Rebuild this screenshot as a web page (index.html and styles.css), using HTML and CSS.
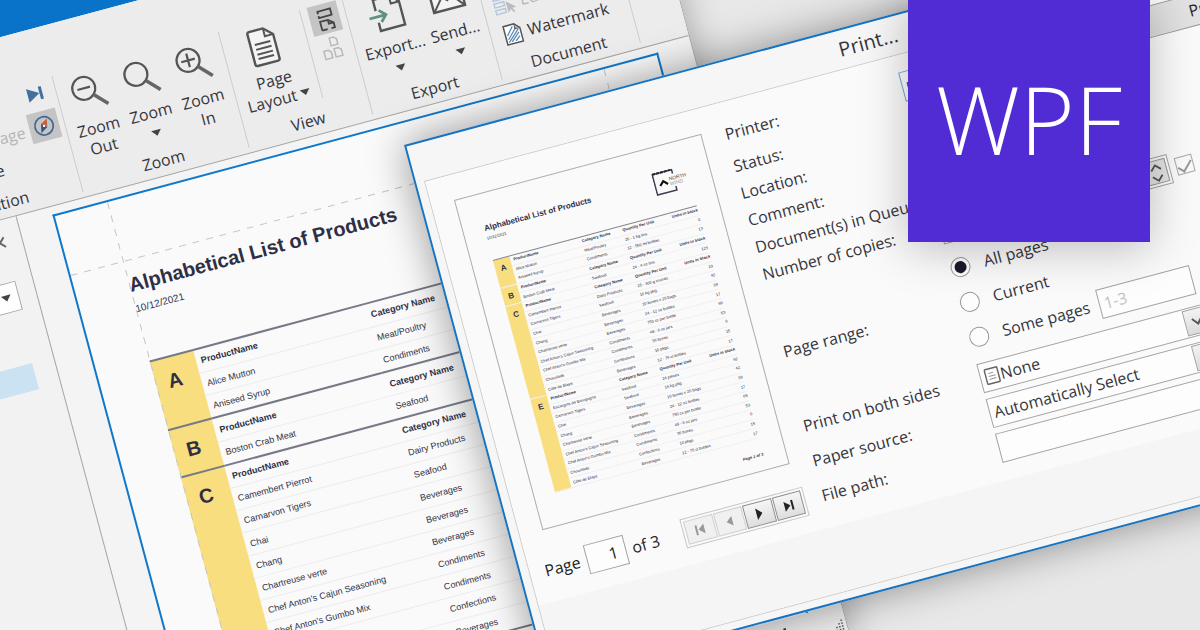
FILE: index.html
```
<!DOCTYPE html>
<html lang="en">
<head>
<meta charset="utf-8">
<title>WPF document viewer and print dialog</title>
<link rel="stylesheet" href="styles.css">
</head>
<body>
<main class="desktop">

  <section class="window" aria-label="Report viewer">
    <header class="window-title"></header>
    <div class="ribbon">
      <div class="group group-nav">
        <div class="tools">
          <div class="small-list">
            <button class="small-tool" type="button"></button>
            <button class="small-tool" type="button" disabled>Next Page</button>
            <button class="small-tool indent" type="button">Go to Page</button>
          </div>
          <div class="icon-list">
            <button class="icon-tool" type="button" aria-label="Last page">
              <svg width="30" height="30" viewBox="0 0 30 30"><path d="M7 6 L19 13 L7 20Z" fill="#41719f"/><path d="M20.500 6.500V19.500" stroke="#41719f" stroke-width="3"/></svg>
            </button>
            <button class="icon-tool active" type="button" aria-label="Navigate">
              <svg width="30" height="30" viewBox="0 0 30 30"><circle cx="15" cy="15" r="9.200" fill="none" stroke="#3d6796" stroke-width="1.700"/><path d="M19.500 8.500 L17.800 17 L12.500 12.500Z" fill="#c8623c"/><path d="M10.500 21.500 L12.500 12.500 L17.800 17Z" fill="#35587f"/><circle cx="15" cy="15" r="1.200" fill="#fff"/></svg>
            </button>
          </div>
        </div>
        <div class="group-name">Navigation</div>
      </div>

      <div class="group group-zoom">
        <div class="tools centered">
          <button class="big-tool" type="button">
            <svg width="40" height="40" viewBox="0 0 40 40"><circle cx="15" cy="14" r="11.500" fill="none" stroke="#555" stroke-width="2.200"/><path d="M8.500 14H21.500" stroke="#555" stroke-width="2.200"/><path d="M23 22.500 L35 35" stroke="#666" stroke-width="3.600"/></svg>
            <span>Zoom<br>Out</span>
          </button>
          <button class="big-tool" type="button">
            <svg width="40" height="40" viewBox="0 0 40 40"><circle cx="15" cy="14" r="11.500" fill="none" stroke="#555" stroke-width="2.200"/><path d="M23 22.500 L35 35" stroke="#666" stroke-width="3.600"/></svg>
            <span>Zoom</span><i class="drop"></i>
          </button>
          <button class="big-tool" type="button">
            <svg width="40" height="40" viewBox="0 0 40 40"><circle cx="15" cy="14" r="11.500" fill="none" stroke="#555" stroke-width="2.200"/><path d="M8 14H22M15 7V21" stroke="#555" stroke-width="2.200"/><path d="M23 22.500 L35 35" stroke="#666" stroke-width="3.600"/></svg>
            <span>Zoom<br>In</span>
          </button>
        </div>
        <div class="group-name">Zoom</div>
      </div>

      <div class="group group-view">
        <div class="tools">
          <button class="big-tool wide" type="button">
            <svg width="40" height="40" viewBox="0 0 40 40"><path d="M8 2.500H22.500L31 10.500V35.500Q31 37.500 29 37.500H8Q6 37.500 6 35.500V4.500Q6 2.500 8 2.500Z" fill="#f4f4f4" stroke="#555" stroke-width="2.400"/><path d="M22.500 3V10.500H30.500" fill="none" stroke="#555" stroke-width="2"/><path d="M10.500 16.500H26.500M10.500 21.500H26.500M10.500 26.500H26.500M10.500 31H26.500" stroke="#555" stroke-width="2"/></svg>
            <span>Page<br>Layout <i class="drop inline"></i></span>
          </button>
          <div class="rule"></div>
          <div class="icon-list">
            <button class="icon-tool active" type="button" aria-label="Continuous layout">
              <svg width="30" height="30" viewBox="0 0 30 30" fill="none" stroke="#444" stroke-width="1.800"><path d="M9.500 9V6.500H22.500V13H9.500V11"/><path d="M9.500 26V17H17.500L22.500 21V26H19M9.500 26H15"/><path d="M17.500 17V21H22.500"/></svg>
            </button>
            <button class="icon-tool" type="button" aria-label="Page grid">
              <svg width="30" height="30" viewBox="0 0 30 30" fill="none" stroke="#b9b9b9" stroke-width="1.500"><path d="M14 4H18.500L21 6.500V12H14Z"/><path d="M5.500 15.500H10L12.500 18V24H5.500Z"/><path d="M16 15.500H20.500L23 18V24H16Z"/></svg>
            </button>
          </div>
        </div>
        <div class="group-name">View</div>
      </div>

      <div class="group group-export">
        <div class="tools centered">
          <button class="big-tool mid" type="button">
            <svg width="40" height="40" viewBox="0 0 40 40"><path d="M10 15V3.500H27L35 11V35.500H10V27" fill="none" stroke="#555" stroke-width="2.400"/><path d="M26.500 4V11.500H34.500" fill="none" stroke="#555" stroke-width="2"/><path d="M2 21H18M13 15L19 21L13 27" fill="none" stroke="#5f917c" stroke-width="2.800"/></svg>
            <span>Export...</span><i class="drop"></i>
          </button>
          <button class="big-tool mid" type="button">
            <svg width="40" height="40" viewBox="0 0 40 40"><rect x="4" y="8" width="32" height="24" fill="#f4f4f4" stroke="#555" stroke-width="2.400"/><path d="M5 9L20 23L35 9M5 31L15 19M35 31L25 19" fill="none" stroke="#555" stroke-width="2"/></svg>
            <span>Send...</span><i class="drop"></i>
          </button>
        </div>
        <div class="group-name">Export</div>
      </div>

      <div class="group group-document">
        <div class="tools">
          <div class="small-list">
            <button class="small-tool" type="button"></button>
            <button class="small-tool" type="button" disabled>
              <svg width="24" height="24" viewBox="0 0 24 24" fill="none"><path d="M1 2H13V7H1ZM1 10H11V14H1ZM1 17H11V21H1Z" stroke="#b6c8dc" stroke-width="1.500"/><path d="M13 10V22L16 19L18.500 23L20 22L18 18H22Z" fill="#bcbcbc"/></svg>Editing Fields
            </button>
            <button class="small-tool" type="button">
              <svg width="24" height="24" viewBox="0 0 24 24" fill="none"><path d="M4 3H15L20 8V22H4Z" fill="#fff" stroke="#555" stroke-width="1.500"/><path d="M6 13L13 5M6 17L17 6M6 20L18 9M9 20L18 12M13 20L18 16" stroke="#5c8ab9" stroke-width="1.300"/><path d="M15 3V8H20" stroke="#555"/></svg>Watermark
            </button>
          </div>
        </div>
        <div class="group-name">Document</div>
      </div>
    </div>

    <div class="workspace">
      <aside class="sidebar">
        <button class="close" type="button" aria-label="Close">
          <svg width="14" height="14" viewBox="0 0 14 14"><path d="M2 2L12 12M12 2L2 12" stroke="#666" stroke-width="2"/></svg>
        </button>
        <button class="combo" type="button" aria-label="Search options"><i class="drop"></i></button>
        <div class="hit"></div>
      </aside>
      <article class="sheet">
        <h1>Alphabetical List of Products</h1>
        <p class="date">10/12/2021</p>
        <table class="products">
          <tbody>
            <tr><th class="letter" rowspan="3">A</th><th class="product">ProductName</th><th>Category Name</th></tr>
            <tr><td>Alice Mutton</td><td>Meat/Poultry</td></tr>
            <tr><td>Aniseed Syrup</td><td>Condiments</td></tr>
          </tbody>
          <tbody>
            <tr><th class="letter" rowspan="2">B</th><th>ProductName</th><th>Category Name</th></tr>
            <tr><td>Boston Crab Meat</td><td>Seafood</td></tr>
          </tbody>
          <tbody>
            <tr><th class="letter" rowspan="10">C</th><th>ProductName</th><th>Category Name</th></tr>
            <tr><td>Camembert Pierrot</td><td>Dairy Products</td></tr>
            <tr><td>Carnarvon Tigers</td><td>Seafood</td></tr>
            <tr><td>Chai</td><td>Beverages</td></tr>
            <tr><td>Chang</td><td>Beverages</td></tr>
            <tr><td>Chartreuse verte</td><td>Beverages</td></tr>
            <tr><td>Chef Anton's Cajun Seasoning</td><td>Condiments</td></tr>
            <tr><td>Chef Anton's Gumbo Mix</td><td>Condiments</td></tr>
            <tr><td>Chocolade</td><td>Confections</td></tr>
            <tr><td>Côte de Blaye</td><td>Beverages</td></tr>
          </tbody>
          <tbody>
            <tr><th class="letter" rowspan="2">E</th><th>ProductName</th><th>Category Name</th></tr>
            <tr><td>Escargots de Bourgogne</td><td>Seafood</td></tr>
          </tbody>
        </table>
      </article>
    </div>

    <footer class="status">
      <svg class="zoom-slider" width="90" height="20" viewBox="0 0 90 20"><path d="M2 10H72" stroke="#aaa"/><path d="M76 10H86M81 5V15" stroke="#333" stroke-width="2.500"/></svg>
      <svg class="grip" width="14" height="14" viewBox="0 0 14 14"><path d="M12 1V14M9 4V14M6 7V14M3 10V14" stroke="#555" stroke-width="1.500" stroke-dasharray="1.500 1.500"/></svg>
    </footer>
  </section>

  <form class="dialog" aria-label="Print">
    <h2>Print...</h2>
    <div class="dialog-body">
      <div class="dialog-content">
        <div class="preview-column">
          <article class="preview">
            <header>
              <div>
                <h3>Alphabetical List of Products</h3>
                <p>10/12/2021</p>
              </div>
              <svg width="36" height="26" viewBox="0 0 36 26"><path d="M21 6V2H1V23H21V19" fill="none" stroke="#3c3f50" stroke-width="1.500"/><path d="M1 2H21" stroke="#222436" stroke-width="2" stroke-dasharray="3 1"/><path d="M6 15L10 11L14 15" fill="none" stroke="#111" stroke-width="2.200"/><text x="16" y="12" font-size="5" fill="#444">NORTH</text><text x="16" y="17" font-size="5" fill="#999">WIND</text></svg>
            </header>
            <table class="mini">
              <tbody>
                <tr><th class="letter" rowspan="3">A</th><th class="product">ProductName</th><th class="category">Category Name</th><th>Quantity Per Unit</th><th>Units in Stock</th></tr>
                <tr><td>Alice Mutton</td><td>Meat/Poultry</td><td>20 - 1 kg tins</td><td>0</td></tr>
                <tr><td>Aniseed Syrup</td><td>Condiments</td><td>12 - 550 ml bottles</td><td>13</td></tr>
              </tbody>
              <tbody>
                <tr><th class="letter" rowspan="2">B</th><th>ProductName</th><th>Category Name</th><th>Quantity Per Unit</th><th>Units in Stock</th></tr>
                <tr><td>Boston Crab Meat</td><td>Seafood</td><td>24 - 4 oz tins</td><td>123</td></tr>
              </tbody>
              <tbody>
                <tr><th class="letter" rowspan="10">C</th><th>ProductName</th><th>Category Name</th><th>Quantity Per Unit</th><th>Units in Stock</th></tr>
                <tr><td>Camembert Pierrot</td><td>Dairy Products</td><td>15 - 300 g rounds</td><td>19</td></tr>
                <tr><td>Carnarvon Tigers</td><td>Seafood</td><td>16 kg pkg.</td><td>42</td></tr>
                <tr><td>Chai</td><td>Beverages</td><td>10 boxes x 20 bags</td><td>39</td></tr>
                <tr><td>Chang</td><td>Beverages</td><td>24 - 12 oz bottles</td><td>17</td></tr>
                <tr><td>Chartreuse verte</td><td>Beverages</td><td>750 cc per bottle</td><td>69</td></tr>
                <tr><td>Chef Anton's Cajun Seasoning</td><td>Condiments</td><td>48 - 6 oz jars</td><td>53</td></tr>
                <tr><td>Chef Anton's Gumbo Mix</td><td>Condiments</td><td>36 boxes</td><td>0</td></tr>
                <tr><td>Chocolade</td><td>Confections</td><td>10 pkgs.</td><td>15</td></tr>
                <tr><td>Côte de Blaye</td><td>Beverages</td><td>12 - 75 cl bottles</td><td>17</td></tr>
              </tbody>
              <tbody>
                <tr><th class="letter" rowspan="10">E</th><th>ProductName</th><th>Category Name</th><th>Quantity Per Unit</th><th>Units in Stock</th></tr>
                <tr><td>Escargots de Bourgogne</td><td>Seafood</td><td>24 pieces</td><td>62</td></tr>
                <tr><td>Carnarvon Tigers</td><td>Seafood</td><td>16 kg pkg.</td><td>42</td></tr>
                <tr><td>Chai</td><td>Beverages</td><td>10 boxes x 20 bags</td><td>39</td></tr>
                <tr><td>Chang</td><td>Beverages</td><td>24 - 12 oz bottles</td><td>17</td></tr>
                <tr><td>Chartreuse verte</td><td>Beverages</td><td>750 cc per bottle</td><td>69</td></tr>
                <tr><td>Chef Anton's Cajun Seasoning</td><td>Condiments</td><td>48 - 6 oz jars</td><td>53</td></tr>
                <tr><td>Chef Anton's Gumbo Mix</td><td>Condiments</td><td>36 boxes</td><td>0</td></tr>
                <tr><td>Chocolade</td><td>Confections</td><td>10 pkgs.</td><td>15</td></tr>
                <tr><td>Côte de Blaye</td><td>Beverages</td><td>12 - 75 cl bottles</td><td>17</td></tr>
              </tbody>
            </table>
            <footer>Page 1 of 3</footer>
          </article>
          <div class="pager">
            <label for="page">Page</label>
            <input id="page" class="box" type="text" value="1">
            <span>of 3</span>
            <div class="pager-nav">
              <button type="button" disabled aria-label="First page"><svg width="16" height="16" viewBox="0 0 16 16"><path d="M4 3V13" stroke="#999" stroke-width="2"/><path d="M12 3V13L6 8Z" fill="#999"/></svg></button>
              <button type="button" disabled aria-label="Previous page"><svg width="16" height="16" viewBox="0 0 16 16"><path d="M11 3V13L5 8Z" fill="#999"/></svg></button>
              <button type="button" aria-label="Next page"><svg width="16" height="16" viewBox="0 0 16 16"><path d="M5 2V14L11 8Z" fill="#222"/></svg></button>
              <button type="button" aria-label="Last page"><svg width="16" height="16" viewBox="0 0 16 16"><path d="M4 3V13L10 8Z" fill="#222"/><path d="M12 3V13" stroke="#222" stroke-width="2"/></svg></button>
            </div>
          </div>
        </div>

        <div class="options">
          <label for="printer">Printer:</label>
          <div class="printer-row">
            <div class="box select focus">
              <svg width="26" height="26" viewBox="0 0 26 26"><path d="M1 10H21V19H1ZM5 4H18V10H5Z" fill="#777" stroke="#555"/></svg>
              <select id="printer"><option></option></select><span class="arrow"></span>
            </div>
            <button class="preferences" type="button">Preferences</button>
          </div>
          <span>Status:</span><span></span>
          <span>Location:</span><span></span>
          <span>Comment:</span><span></span>
          <span>Document(s) in Queue:</span><span></span>
          <label class="copies-label" for="copies">Number of copies:</label>
          <div class="copies">
            <div class="box spin">
              <input id="copies" type="text" value="1">
              <span class="spin-button"><svg width="16" height="24" viewBox="0 0 16 24"><path d="M3 9L8 4L13 9M3 15L8 20L13 15" fill="none" stroke="#555" stroke-width="1.800"/></svg></span>
            </div>
            <label class="collate"><input type="checkbox" checked disabled aria-label="Collate"><svg width="28" height="24" viewBox="0 0 28 24"><path d="M2 5H12V18H2Z" fill="#f3d9a8" stroke="#e0b060"/></svg></label>
          </div>
          <span class="range-label">Page range:</span>
          <div class="range">
            <label><input type="radio" name="range" checked>All pages</label>
            <label><input type="radio" name="range">Current</label>
            <div class="some"><label><input type="radio" name="range">Some pages</label><input class="box" type="text" placeholder="1-3" aria-label="Pages to print"></div>
          </div>
          <label for="sides">Print on both sides</label>
          <div class="box select">
            <svg width="16" height="18" viewBox="0 0 16 18"><rect x="1" y="1.500" width="13" height="15" rx="1" fill="none" stroke="#666" stroke-width="1.500"/><path d="M4 6H9M4 9H11M4 12H11" stroke="#999"/></svg>
            <select id="sides"><option>None</option></select>
            <span class="arrow"><svg width="16" height="16" viewBox="0 0 16 16"><path d="M3 5L8 11L13 5" fill="none" stroke="#555" stroke-width="2"/></svg></span>
          </div>
          <label for="source">Paper source:</label>
          <div class="box select">
            <select id="source"><option>Automatically Select</option></select>
            <span class="arrow"><svg width="16" height="16" viewBox="0 0 16 16"><path d="M3 5L8 11L13 5" fill="none" stroke="#555" stroke-width="2"/></svg></span>
          </div>
          <label for="path">File path:</label>
          <input id="path" class="box" type="text">
        </div>
      </div>
      <div class="dialog-footer"></div>
    </div>
  </form>

  <div class="badge">WPF</div>
</main>
</body>
</html>
```
FILE: styles.css
```
* { box-sizing: border-box; }

body {
  margin: 0;
  font: 16px/20px "Open Sans", "Noto Sans", sans-serif;
  color: #35353c;
}

button, input, select { font: inherit; color: inherit; margin: 0; }
button { padding: 0; border: 0; background: none; }
h1, h2, h3, p { margin: 0; }
svg { flex: none; display: block; }

.desktop {
  position: relative;
  height: 100vh;
  overflow: hidden;
  background: #e8e8e8;
}

/* Report viewer window */
.window {
  position: absolute;
  top: 0;
  left: 0;
  width: 917px;
  display: flex;
  flex-direction: column;
  transform-origin: 0 0;
  transform: rotate(-15deg) translate(-260px, -20px);
  background: #f4f4f4;
  border-right: 1px solid #a8a8a8;
  box-shadow: 0 0 36px rgba(0, 0, 0, .3);
}
.window-title { height: 56px; background: #0873c8; }

.ribbon {
  display: flex;
  padding: 51px 0 5px;
  background: #ececec;
  border-bottom: 1px solid #a5a5a5;
}
.group {
  display: flex;
  flex-direction: column;
  border-right: 1px solid #cdcdcd;
}
.group-nav { width: 291px; }
.group-zoom { width: 172px; }
.group-view { width: 128px; }
.group-export { width: 134px; }
.group-document { width: 143px; }
.group-nav .group-name { padding-left: 104px; }
.group-name { text-align: center; }
.tools { display: flex; height: 100px; }
.tools.centered { justify-content: center; }
.group-nav .tools { justify-content: flex-end; padding-right: 5px; gap: 5px; }
.group-view .tools { padding-left: 3px; }
.group-export .tools { padding-left: 6px; }
.group-document .tools { padding-left: 10px; }

.big-tool {
  width: 54px;
  padding-top: 6px;
  display: flex;
  flex-direction: column;
  align-items: center;
  white-space: nowrap;
}
.big-tool.mid { width: 62px; }
.big-tool.wide { width: 76px; }
.big-tool span { margin-top: 5px; }
.drop {
  border: 5px solid transparent;
  border-top: 6px solid #444;
  border-bottom: 0;
  margin-top: 8px;
}
.drop.inline { display: inline-block; margin: 0 0 3px; }
.rule { width: 1px; height: 91px; margin: 0 7px 0 4px; background: #cdcdcd; }

.small-list { display: flex; flex-direction: column; align-items: flex-end; }
.group-document .small-list { align-items: flex-start; }
.small-tool {
  height: 31px;
  display: flex;
  align-items: center;
  gap: 3px;
  white-space: nowrap;
}
.small-tool:disabled { color: #b5b5b5; }
.small-tool.indent { padding-right: 30px; }
.icon-list { display: flex; flex-direction: column; gap: 1px; }
.icon-tool { width: 30px; height: 30px; }
.icon-tool.active { background: #c4c4c4; }

.workspace { display: flex; height: 588px; overflow: hidden; }
.sidebar {
  width: 220px;
  padding: 15px 17px 0 0;
  display: flex;
  flex-direction: column;
  align-items: flex-end;
  border-right: 1px solid #a5a5a5;
  background: #f2f2f2;
}
.close { height: 14px; margin-right: -2px; }
.combo {
  width: 160px;
  height: 30px;
  margin-top: 33px;
  padding-right: 7px;
  display: flex;
  justify-content: flex-end;
  border: 1px solid #a8a8a8;
  background: #fff;
}
.combo .drop { margin-top: 11px; }
.hit { width: 160px; height: 27px; margin: 54px 5px 0 0; background: #cbe2f2; }

.sheet {
  position: relative;
  flex: 1;
  margin: 8px 34px 0 35px;
  padding: 74px 54px 0;
  border: 2px solid #0f78ca;
  border-bottom: 0;
  background: #fafafa;
  color: #2e2f45;
  font-family: "Liberation Sans", Arial, sans-serif;
}
.sheet::before, .sheet::after { content: ""; position: absolute; pointer-events: none; }
.sheet::before {
  top: 0;
  bottom: 0;
  left: 54px;
  right: 54px;
  z-index: 1;
  background:
    repeating-linear-gradient(#c6c6c9 0 7px, transparent 7px 14px) left / 1px 100% no-repeat,
    repeating-linear-gradient(#c6c6c9 0 7px, transparent 7px 14px) right / 1px 100% no-repeat;
}
.sheet::after {
  top: 61px;
  left: 0;
  right: 0;
  height: 1px;
  background: repeating-linear-gradient(90deg, #c6c6c9 0 7px, transparent 7px 14px);
}
.sheet h1 { font-size: 20px; line-height: 24px; }
.sheet .date { margin-top: 6px; font-size: 10px; line-height: 14px; }

table { width: 100%; border-collapse: collapse; text-align: left; table-layout: fixed; }
th, td { padding: 0; }
.letter { background: #f9de80; text-align: center; vertical-align: top; }

.products { height: 402px; margin-top: 46px; font-size: 9px; line-height: 12px; }
.products tbody { border-top: 2px solid #767986; }
.products tr { border-bottom: 1px solid #ececee; }
.products td, .products th { padding: 0 0 0 5px; }
.products .letter { width: 45px; padding: 11px 5px 0 0; font-size: 20px; line-height: 24px; }
.products .product { width: 176px; }

.status {
  height: 34px;
  padding: 0 2px 6px 0;
  display: flex;
  justify-content: flex-end;
  align-items: center;
  background: #ececec;
}
.status .zoom-slider { margin-right: 36px; }
.status .grip { align-self: flex-end; }

/* Print dialog */
.dialog {
  position: absolute;
  top: 145px;
  left: 404px;
  width: 950px;
  display: flex;
  flex-direction: column;
  transform-origin: 0 0;
  transform: rotate(-15deg);
  border: 2px solid #1874c1;
  background: #f6f6f6;
  box-shadow: 0 0 40px rgba(0, 0, 0, .4);
}
.dialog h2 { font-size: 20px; font-weight: 400; line-height: 38px; text-align: center; }
.dialog-body { margin: 0 8px 7px; border: 1px solid #cbcbcb; }
.dialog-content { display: flex; gap: 17px; padding: 17px 8px 0 15px; background: #fafafa; }
.dialog-footer { height: 65px; background: #f5f5f5; }

.preview-column { width: 270px; padding: 8px 0 17px; }
.preview {
  width: 256px;
  height: 342px;
  margin-left: 8px;
  padding: 24px 22px 0 21px;
  border: 1px solid #adadad;
  color: #2e2f45;
  font: 4px/8px "Liberation Sans", Arial, sans-serif;
}
.preview header { height: 43px; display: flex; justify-content: space-between; }
.preview h3 { margin-top: 5px; font-size: 8px; line-height: 12px; }
.preview footer { margin: 13px 0 0; text-align: right; font-weight: 700; font-style: italic; }
.mini { height: 241px; }
.mini tbody { border-top: 1px solid #85878f; }
.mini tr { border-bottom: 1px solid #f0f0f2; }
.mini td, .mini th { padding: 0 0 0 3px; white-space: nowrap; }
.mini .letter { width: 17px; padding: 5px 0 0; font-size: 8px; line-height: 10px; }
.mini .product { width: 71px; }
.mini .category { width: 42px; }
.mini tr > :last-child { text-align: right; }

.box { height: 30px; border: 1px solid #a3a3a3; background: #fdfdfd; padding: 0 4px; min-width: 0; outline: 0; }

.pager { display: flex; align-items: center; margin-top: 25px; color: #222; }
.pager .box { width: 41px; margin: 0 6px 0 7px; padding-right: 8px; text-align: right; }
.pager-nav {
  margin-left: auto;
  display: flex;
  gap: 1px;
  width: 127px;
  height: 30px;
  padding: 2px;
  border: 1px solid #c6c6c6;
}
.pager-nav button {
  flex: 1;
  display: grid;
  place-items: center;
  border: 1px solid #8e8e8e;
  background: linear-gradient(#f5f5f5, #dedede);
}
.pager-nav button:disabled { border-color: #d0d0d0; background: #f0f0f0; }

.options {
  flex: 1;
  display: grid;
  grid-template-columns: 183px 1fr;
  grid-template-rows: 34px repeat(4, 28px) 40px 113px repeat(3, 36px);
  align-items: center;
}
.options > label:first-child, .printer-row { align-self: start; line-height: 30px; }
.printer-row { display: flex; gap: 8px; }
.printer-row .select { width: 240px; }
.preferences {
  flex: 1;
  border: 1px solid #9a9a9a;
  background: linear-gradient(90deg, #dcdcdc, #f0f0f0);
  text-align: center;
  color: #222;
}
.options .box.focus { border-color: #6faadb; }
.options > .box { width: 240px; }
.select { display: flex; align-items: center; padding-right: 0; }
.select select { flex: 1; min-width: 0; padding: 0; border: 0; background: none; appearance: none; outline: 0; }
.arrow {
  width: 26px;
  height: 26px;
  margin-right: 1px;
  display: grid;
  place-items: center;
  border: 1px solid #a3a3a3;
  background: linear-gradient(#f3f3f3, #dadada);
}
.copies-label { align-self: start; line-height: 28px; }
.copies { align-self: start; display: flex; align-items: center; gap: 6px; margin-top: 2px; }
.spin { width: 238px; display: flex; align-items: center; padding-right: 2px; }
.spin input { flex: 1; min-width: 0; border: 0; background: none; outline: 0; }
.spin-button { width: 22px; height: 24px; display: grid; place-items: center; border: 1px solid #999; background: #e4e4e4; }
.collate { display: flex; align-items: center; gap: 8px; }
.collate input {
  width: 18px;
  height: 18px;
  appearance: none;
  border: 1px solid #a8a8a8;
  display: grid;
  place-items: center;
}
.collate input:checked::before {
  content: "";
  width: 12px;
  height: 6px;
  border: solid #999;
  border-width: 0 0 2px 2px;
  transform: rotate(-45deg);
}

.range-label { align-self: start; line-height: 108px; }
.range { align-self: start; display: grid; grid-auto-rows: 36px; align-items: center; }
.range label { display: flex; align-items: center; gap: 14px; }
.some { display: flex; align-items: center; gap: 10px; }
.some .box { width: 97px; }
.some .box::placeholder { color: #c2c2c2; opacity: 1; }
input[type="radio"] {
  width: 20px;
  height: 20px;
  appearance: none;
  display: grid;
  place-items: center;
  border: 1px solid #999;
  border-radius: 50%;
  background: #fdfdfd;
}
input[type="radio"]:checked::before { content: ""; width: 12px; height: 12px; border-radius: 50%; background: #1b1a2b; }

.badge {
  position: absolute;
  top: 0;
  left: 908px;
  width: 242px;
  height: 242px;
  display: grid;
  place-items: center;
  padding-bottom: 4px;
  background: #512bd4;
  box-shadow: 0 6px 44px rgba(0, 0, 0, .25);
  color: #fff;
  font-size: 94px;
  font-weight: 300;
  line-height: 120px;
}
```
